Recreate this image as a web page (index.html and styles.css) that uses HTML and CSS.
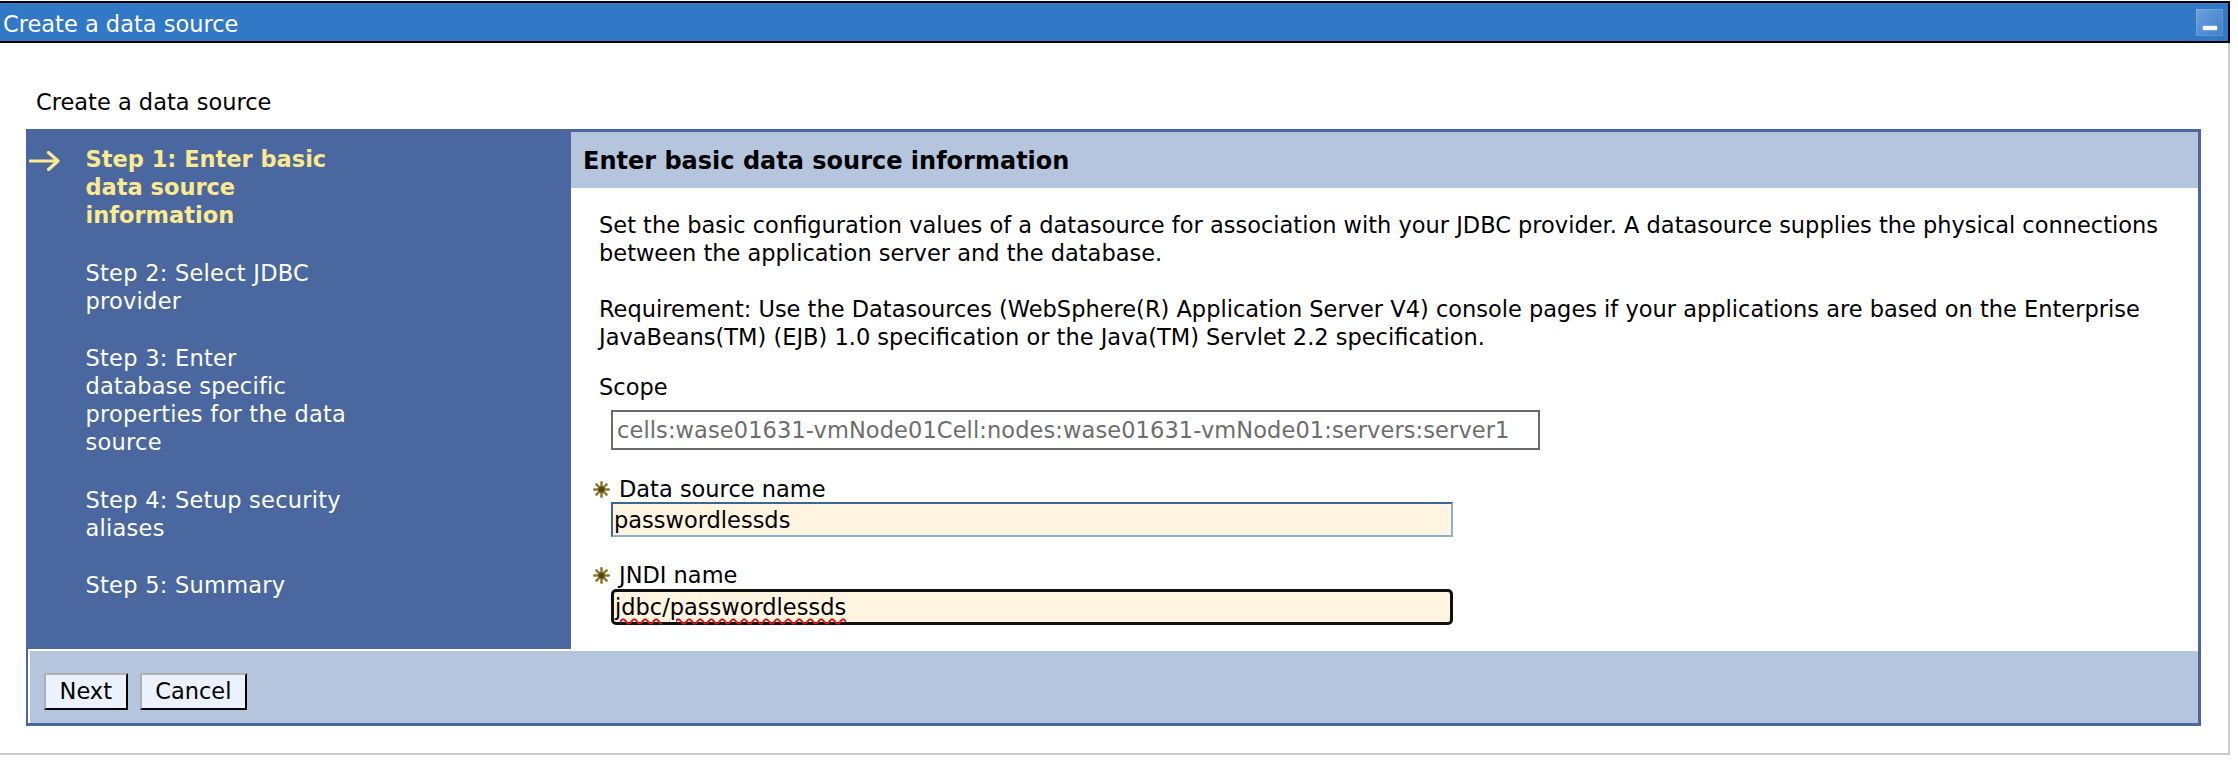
FILE: index.html
```html
<!DOCTYPE html>
<html>
<head>
<meta charset="utf-8">
<title>Create a data source</title>
<link rel="stylesheet" href="styles.css">
</head>
<body>
<div class="titlebar">
  <span class="title">Create a data source</span>
  <span class="minbtn"><span class="minbar"></span></span>
</div>
<div class="frame">
  <div class="subtitle">Create a data source</div>
  <div class="panel">
    <div class="sidebar">
      <div class="step current">
        <span class="marker"><svg class="arrow" width="32" height="20" viewBox="0 0 32 20"><path d="M1 10 H29 M19.5 1.5 L29 10 L19.5 18.5" fill="none" stroke="#fde990" stroke-width="3.2" stroke-linecap="round" stroke-linejoin="round"/></svg></span>
        <span class="step-text">Step 1: Enter basic<br>data source<br>information</span>
      </div>
      <div class="step">
        <span class="marker"></span>
        <span class="step-text">Step 2: Select JDBC<br>provider</span>
      </div>
      <div class="step">
        <span class="marker"></span>
        <span class="step-text">Step 3: Enter<br>database specific<br>properties for the data<br>source</span>
      </div>
      <div class="step">
        <span class="marker"></span>
        <span class="step-text">Step 4: Setup security<br>aliases</span>
      </div>
      <div class="step">
        <span class="marker"></span>
        <span class="step-text">Step 5: Summary</span>
      </div>
    </div>
    <div class="content">
      <div class="content-head">Enter basic data source information</div>
      <div class="content-body">
        <p class="desc">Set the basic configuration values of a datasource for association with your JDBC provider. A datasource supplies the physical connections<br>between the application server and the database.</p>
        <p class="desc second">Requirement: Use the Datasources (WebSphere(R) Application Server V4) console pages if your applications are based on the Enterprise<br>JavaBeans(TM) (EJB) 1.0 specification or the Java(TM) Servlet 2.2 specification.</p>
        <div class="label scope-label">Scope</div>
        <div class="field scope">cells:wase01631-vmNode01Cell:nodes:wase01631-vmNode01:servers:server1</div>
        <div class="label req ds-label">
          <svg class="star" width="17" height="17" viewBox="0 0 16 16"><g stroke="#8a7a30" stroke-width="2.4" stroke-linecap="round"><path d="M8 1.2V14.8M1.2 8H14.8M3.2 3.2L12.8 12.8M12.8 3.2L3.2 12.8"/></g><circle cx="8" cy="8" r="2.8" fill="#54460e"/></svg>
          <span>Data source name</span>
        </div>
        <div class="field ds">passwordlessds</div>
        <div class="label req jndi-label">
          <svg class="star" width="17" height="17" viewBox="0 0 16 16"><g stroke="#8a7a30" stroke-width="2.4" stroke-linecap="round"><path d="M8 1.2V14.8M1.2 8H14.8M3.2 3.2L12.8 12.8M12.8 3.2L3.2 12.8"/></g><circle cx="8" cy="8" r="2.8" fill="#54460e"/></svg>
          <span>JNDI name</span>
        </div>
        <div class="field jndi"><span class="misspelled">jdbc</span>/<span class="misspelled">passwordlessds</span></div>
      </div>
    </div>
    <div class="footer">
      <button class="btn">Next</button>
      <button class="btn">Cancel</button>
    </div>
  </div>
</div>
</body>
</html>
```

FILE: styles.css
```css
* {
  box-sizing: border-box;
}

html, body {
  margin: 0;
  padding: 0;
  background: #ffffff;
}

body {
  font-family: "DejaVu Sans", Verdana, sans-serif;
  font-size: 22.5px;
  color: #000;
}

.titlebar {
  margin-top: 1px;
  width: 2230px;
  height: 42px;
  background: #3178c6;
  border: 2px solid #000;
  border-left: none;
  display: flex;
  align-items: center;
  justify-content: space-between;
  padding-left: 3px;
  padding-right: 5px;
}

.title {
  color: #fff;
  line-height: 34px;
  padding-top: 4px;
  align-self: flex-start;
}

.minbtn {
  width: 27px;
  height: 27px;
  background: linear-gradient(135deg, #6ea3e0 0%, #4f8bd0 60%, #4580c8 100%);
  box-shadow: inset 0 0 0 1px rgba(255, 255, 255, 0.12);
  display: flex;
  align-items: flex-end;
  justify-content: center;
  padding-bottom: 6px;
}

.minbar {
  width: 14px;
  height: 4px;
  background: #f2f7ff;
  box-shadow: 0 0 2px rgba(255, 255, 255, 0.7);
}

.frame {
  width: 2230px;
  border-right: 2px solid #cccccc;
  border-bottom: 2px solid #cccccc;
  padding-top: 45px;
  padding-bottom: 27px;
}

.subtitle {
  line-height: 28px;
  padding-left: 36px;
  margin-bottom: 13px;
}

.panel {
  margin-left: 26px;
  width: 2175px;
  border: 3px solid #4a689f;
  border-left-width: 2px;
  display: grid;
  grid-template-columns: 543px 1fr;
}

.sidebar {
  background: #4a689f;
  padding-top: 13px;
  display: flex;
  flex-direction: column;
  gap: 29.5px;
}

.step {
  display: grid;
  grid-template-columns: 57.5px 1fr;
  line-height: 28px;
  color: #ffffff;
  white-space: nowrap;
  letter-spacing: 0.25px;
}

.step.current {
  color: #fde990;
  font-weight: bold;
  letter-spacing: 0;
}

.marker {
  position: relative;
}

.arrow {
  display: block;
  margin-left: 1px;
  margin-top: 6px;
}

.content {
  background: #fff;
  display: flex;
  flex-direction: column;
}

.content-head {
  background: #b5c5de;
  height: 56px;
  line-height: 56px;
  padding-left: 12px;
  padding-top: 1px;
  font-weight: bold;
  font-size: 24px;
}

.content-body {
  padding: 23px 0 24px 28px;
  flex: 1;
}

.desc {
  margin: 0;
  line-height: 28px;
  white-space: nowrap;
}

.desc.second {
  margin-top: 28px;
}

.label {
  line-height: 28px;
}

.scope-label {
  margin-top: 22px;
}

.req {
  display: flex;
  align-items: center;
  height: 28px;
  margin-left: -6px;
}

.star {
  flex: none;
  margin-right: 9px;
}

.ds-label {
  margin-top: 25px;
}

.jndi-label {
  margin-top: 24px;
}

.field {
  margin-left: 12px;
  display: flex;
  align-items: center;
  white-space: nowrap;
}

.scope {
  margin-top: 9px;
  width: 929px;
  height: 40px;
  border: 2px solid #6b6b6b;
  color: #6d6d6d;
  padding-left: 4px;
  letter-spacing: 0.1px;
}

.ds {
  margin-top: -1px;
  width: 842px;
  height: 35px;
  border: 2px solid;
  border-color: #3a6698 #8cadd0 #8cadd0 #3a6698;
  background: #fff5e0;
  padding-left: 1px;
}

.jndi {
  width: 842px;
  height: 36px;
  border: 3px solid #111;
  border-radius: 5px;
  background: #fff5e0;
  padding-left: 1px;
}

.misspelled {
  text-decoration: underline wavy #e01010;
  text-decoration-thickness: 2px;
  text-underline-offset: 3px;
}

.footer {
  grid-column: 1 / -1;
  background: #b5c5de;
  border-top: 2px solid #fff;
  border-left: 2px solid #fff;
  padding: 22px 0 13px 14px;
  display: flex;
  gap: 12px;
}

.btn {
  font-family: "DejaVu Sans", Verdana, sans-serif;
  font-size: 22.5px;
  color: #000;
  height: 37px;
  padding: 0 13.6px;
  background: #ebf2fd;
  border: 2px solid;
  border-color: #b0b0b0 #000 #000 #b0b0b0;
  border-radius: 0;
  line-height: 33px;
}
```
